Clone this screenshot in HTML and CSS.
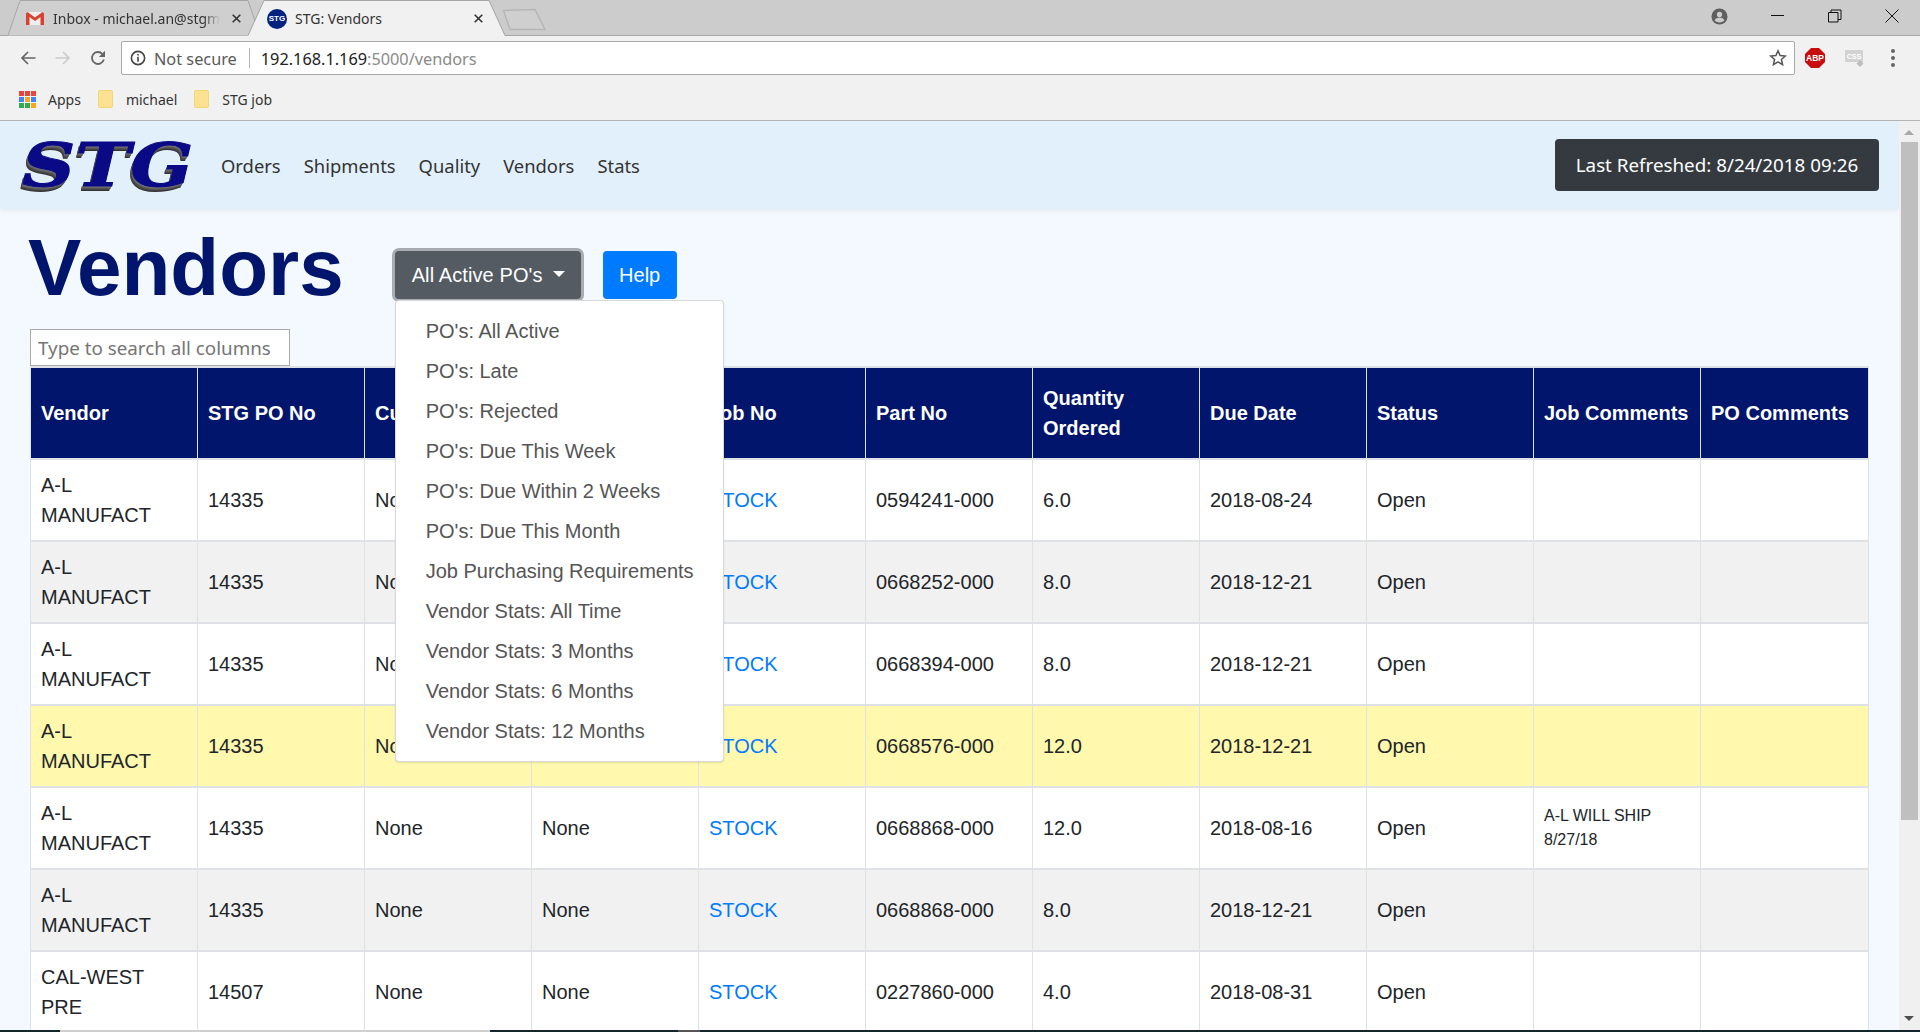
FILE: index.html
```html
<!DOCTYPE html>
<html lang="en">
<head>
    <meta charset="UTF-8">
    <title>STG: Vendors</title>
    <link rel="stylesheet" href="styles.css">
</head>
<body>
<div class="browser">
    <div class="tabstrip">
        <svg class="tab-shapes" viewBox="0 0 560 36">
            <path d="M8 35.500L20 .5H248L260 35.500" fill="#cfcfcf" stroke="#a6a6a6"/>
            <path d="M503.500 10.500L535 9.500L545 29.500H510z" fill="#cfcfcf" stroke="#b6b6b6" stroke-width="1.500"/>
            <path d="M248 36L264 .5H489L505 36z" fill="#f1f1f1"/>
            <path d="M248 35.500L264 .5H489L505 35.500" fill="none" stroke="#a6a6a6"/>
        </svg>
        <div class="tab tab-inactive">
            <svg class="gmail-icon" viewBox="0 0 18 13"><path d="M1 0h16v13H1z" fill="#eee"/><path d="M0 1.500V13h3.500V5L9 9l5.500-4v8H18V1.500L16.500 0 9 5.500 1.500 0z" fill="#d8402f"/></svg>
            <span class="tab-title">Inbox - michael.an@stgm</span>
            <svg class="tab-close" viewBox="0 0 9 9"><path d="M.7.700l7.600 7.600M8.300.700L.7 8.300" stroke="#333" stroke-width="1.600" fill="none"/></svg>
        </div>
        <div class="tab tab-active">
            <span class="tab-favicon">STG</span>
            <span class="tab-title">STG: Vendors</span>
            <svg class="tab-close" viewBox="0 0 9 9"><path d="M.7.700l7.600 7.600M8.300.700L.7 8.300" stroke="#333" stroke-width="1.600" fill="none"/></svg>
        </div>
        <div class="window-controls">
            <svg class="profile-icon" viewBox="0 0 18 18"><circle cx="9" cy="9" r="8.500" fill="#5f5f5f"/><circle cx="9" cy="6.800" r="2.800" fill="#ccc"/><path d="M3.800 13c1-2.200 3-3 5.200-3s4.200.8 5.200 3c-1.300 1.500-3.100 2.300-5.200 2.300S5.100 14.500 3.800 13z" fill="#ccc"/></svg>
            <svg class="win-btn" viewBox="0 0 14 14"><path d="M0 6.500h13" stroke="#111" fill="none"/></svg>
            <svg class="win-btn" viewBox="0 0 14 14"><path d="M.5 3.500h9.500v9.500h-9.500zM3 3.500V1h10v9.500h-3" stroke="#111" fill="none"/></svg>
            <svg class="win-btn" viewBox="0 0 14 14"><path d="M.5.500l13 13M13.500.500l-13 13" stroke="#111" fill="none"/></svg>
        </div>
    </div>
    <div class="toolbar">
        <svg class="nav-icon" viewBox="0 0 16 16"><path d="M15.500 8H2M8 2L2 8l6 6" stroke="#666" stroke-width="1.700" fill="none"/></svg>
        <svg class="nav-icon" viewBox="0 0 16 16"><path d="M.5 8H14M8 2l6 6-6 6" stroke="#ccc" stroke-width="1.700" fill="none"/></svg>
        <svg class="nav-icon reload-icon" viewBox="0 0 16 16"><path d="M13.800 9.500A6 6 0 1 1 12.300 3.800" stroke="#666" stroke-width="1.800" fill="none"/><path d="M15 .8v6.200H8.800z" fill="#666"/></svg>
        <div class="omnibox">
            <svg class="info-icon" viewBox="0 0 14 14"><circle cx="7" cy="7" r="5.800" stroke="#444" stroke-width="1.400" fill="none"/><path d="M6.300 6h1.400v4.300H6.300zM6.300 3.400h1.400v1.500H6.300z" fill="#444"/></svg>
            <span class="not-secure">Not secure</span>
            <span class="omni-sep"></span>
            <span class="url">192.168.1.169<span class="url-dim">:5000/vendors</span></span>
            <svg class="star-icon" viewBox="0 0 18 18"><path d="M9 1.800l2.100 4.800 5.200.5-3.900 3.400 1.200 5.100L9 12.900l-4.600 2.700 1.200-5.100-3.900-3.400 5.200-.5z" stroke="#555" stroke-width="1.500" fill="none"/></svg>
        </div>
        <svg class="abp-icon" viewBox="0 0 20 20"><path d="M6 0h8l6 6v8l-6 6H6l-6-6V6z" fill="#c70d0d"/><text x="10" y="13" class="abp-text">ABP</text></svg>
        <svg class="css-icon" viewBox="0 0 20 17"><path d="M0 0h18v12H0z" fill="#d2d2d2"/><text x="9" y="9" class="css-text">CSS</text><path d="M15 10l3.500 3.500L15 17l-3.500-3.500z" fill="#bdbdbd"/></svg>
        <div class="menu-dots"><i></i><i></i><i></i></div>
    </div>
    <div class="bookmarks">
        <div class="bookmark">
            <span class="apps-grid"><i class="r"></i><i class="r"></i><i class="r"></i><i class="b"></i><i class="y"></i><i class="b"></i><i class="g"></i><i class="g"></i><i class="y"></i></span>
            Apps
        </div>
        <div class="bookmark bookmark-folder"><span class="folder"></span>michael</div>
        <div class="bookmark bookmark-folder"><span class="folder"></span>STG job</div>
    </div>
</div>

<div class="viewport">
    <div class="page">
        <nav class="navbar">
            <div class="brand"><span class="brand-text">STG</span></div>
            <a class="nav-link">Orders</a>
            <a class="nav-link">Shipments</a>
            <a class="nav-link">Quality</a>
            <a class="nav-link">Vendors</a>
            <a class="nav-link">Stats</a>
            <div class="refreshed">Last Refreshed: 8/24/2018 09:26</div>
        </nav>

        <div class="content">
            <div class="title-row">
                <h1>Vendors</h1>
                <div class="dropdown">
                    <button class="btn btn-toggle">All Active PO's<span class="caret"></span></button>
                    <div class="dropdown-menu">
                        <a>PO's: All Active</a>
                        <a>PO's: Late</a>
                        <a>PO's: Rejected</a>
                        <a>PO's: Due This Week</a>
                        <a>PO's: Due Within 2 Weeks</a>
                        <a>PO's: Due This Month</a>
                        <a>Job Purchasing Requirements</a>
                        <a>Vendor Stats: All Time</a>
                        <a>Vendor Stats: 3 Months</a>
                        <a>Vendor Stats: 6 Months</a>
                        <a>Vendor Stats: 12 Months</a>
                    </div>
                </div>
                <button class="btn btn-help">Help</button>
            </div>
            <input class="search" type="text" placeholder="Type to search all columns">
            <table class="vendors">
                <thead>
                    <tr>
                        <th>Vendor</th><th>STG PO No</th><th>Customer</th><th>Sales Order</th><th>Job No</th><th>Part No</th><th>Quantity Ordered</th><th>Due Date</th><th>Status</th><th>Job Comments</th><th>PO Comments</th>
                    </tr>
                </thead>
                <tbody>
                    <tr><td>A-L MANUFACT</td><td>14335</td><td>None</td><td>None</td><td><a>STOCK</a></td><td>0594241-000</td><td>6.0</td><td>2018-08-24</td><td>Open</td><td></td><td></td></tr>
                    <tr><td>A-L MANUFACT</td><td>14335</td><td>None</td><td>None</td><td><a>STOCK</a></td><td>0668252-000</td><td>8.0</td><td>2018-12-21</td><td>Open</td><td></td><td></td></tr>
                    <tr><td>A-L MANUFACT</td><td>14335</td><td>None</td><td>None</td><td><a>STOCK</a></td><td>0668394-000</td><td>8.0</td><td>2018-12-21</td><td>Open</td><td></td><td></td></tr>
                    <tr class="due-soon"><td>A-L MANUFACT</td><td>14335</td><td>None</td><td>None</td><td><a>STOCK</a></td><td>0668576-000</td><td>12.0</td><td>2018-12-21</td><td>Open</td><td></td><td></td></tr>
                    <tr><td>A-L MANUFACT</td><td>14335</td><td>None</td><td>None</td><td><a>STOCK</a></td><td>0668868-000</td><td>12.0</td><td>2018-08-16</td><td>Open</td><td class="comment">A-L WILL SHIP 8/27/18</td><td></td></tr>
                    <tr><td>A-L MANUFACT</td><td>14335</td><td>None</td><td>None</td><td><a>STOCK</a></td><td>0668868-000</td><td>8.0</td><td>2018-12-21</td><td>Open</td><td></td><td></td></tr>
                    <tr><td>CAL-WEST PRE</td><td>14507</td><td>None</td><td>None</td><td><a>STOCK</a></td><td>0227860-000</td><td>4.0</td><td>2018-08-31</td><td>Open</td><td></td><td></td></tr>
                </tbody>
            </table>
        </div>
    </div>
    <div class="scrollbar">
        <span class="arrow-up"></span>
        <div class="thumb"></div>
        <span class="arrow-down"></span>
    </div>
</div>
<div class="taskbar-edge">
    <span class="edge-dark"></span>
    <span class="edge-light"></span>
    <span class="edge-dark edge-wide"></span>
    <span class="edge-grey"></span>
    <span class="edge-dark edge-rest"></span>
</div>
</body>
</html>
```

FILE: styles.css
```css
* {
    box-sizing: border-box;
}

html, body {
    margin: 0;
    height: 1032px;
    overflow: hidden;
}

body {
    display: flex;
    flex-direction: column;
    font-family: "Liberation Sans", Arial, sans-serif;
    background-color: #f3f9ff;
}

/* browser chrome */
.browser {
    flex: none;
    height: 121px;
    background-color: #f1f1f1;
    border-bottom: 1px solid #b4b4b4;
    font-family: "Noto Sans", "Open Sans", sans-serif;
}

.tabstrip {
    position: relative;
    display: flex;
    align-items: flex-start;
    height: 36px;
    padding-left: 26px;
    background-color: #cccccc;
    border-bottom: 1px solid #a6a6a6;
}

.tab-shapes {
    position: absolute;
    top: 0;
    left: 0;
    width: 560px;
    height: 36px;
}

.tab {
    position: relative;
    display: flex;
    align-items: center;
    height: 35px;
    padding-top: 2px;
    font-size: 14px;
    color: #333;
}

.gmail-icon {
    flex: none;
    width: 18px;
    height: 13px;
    margin-right: 9px;
}

.tab-inactive .tab-title {
    width: 167px;
    -webkit-mask-image: linear-gradient(to right, #000 90%, transparent);
    mask-image: linear-gradient(to right, #000 90%, transparent);
}

.tab-active {
    margin-left: 26px;
}

.tab-active .tab-title {
    width: 179px;
}

.tab-favicon {
    flex: none;
    width: 20px;
    height: 20px;
    margin-right: 8px;
    border-radius: 50%;
    background-color: #03217f;
    color: #fff;
    font: bold 8px/20px "Liberation Sans", sans-serif;
    text-align: center;
}

.tab-title {
    overflow: hidden;
    white-space: nowrap;
}

.tab-close {
    flex: none;
    width: 9px;
    height: 9px;
}

.tab-inactive .tab-close {
    margin-left: 12px;
}

.window-controls {
    position: relative;
    display: flex;
    align-items: center;
    gap: 43px;
    margin-left: auto;
    height: 32px;
    padding-right: 21px;
}

.profile-icon {
    width: 17px;
    height: 17px;
}

.win-btn {
    width: 14px;
    height: 14px;
}

.toolbar {
    display: flex;
    align-items: center;
    height: 44px;
    padding-left: 20px;
}

.nav-icon {
    width: 16px;
    height: 16px;
    margin-right: 19px;
    flex: none;
}

.reload-icon {
    margin-right: 15px;
}

.omnibox {
    display: flex;
    align-items: center;
    flex: none;
    width: 1674px;
    height: 34px;
    padding: 0 7px 0 8px;
    background-color: #fff;
    border: 1px solid #a9a9a9;
    border-radius: 2px;
    font-size: 16.300px;
}

.info-icon {
    width: 16px;
    height: 16px;
    margin-right: 8px;
}

.not-secure {
    padding-top: 2px;
    color: #5a5a5a;
}

.omni-sep {
    width: 1px;
    height: 20px;
    margin: 0 11px 0 12px;
    background-color: #b5b5b5;
}

.url {
    padding-top: 2px;
    color: #222;
}

.url-dim {
    color: #8a8a8a;
}

.star-icon {
    width: 18px;
    height: 18px;
    margin-left: auto;
}

.abp-icon {
    width: 20px;
    height: 20px;
    margin-left: 10px;
}

.abp-text {
    font: bold 8.500px "Liberation Sans", sans-serif;
    fill: #fff;
    text-anchor: middle;
}

.css-icon {
    width: 20px;
    height: 17px;
    margin-left: 20px;
}

.css-text {
    font: bold 7px "Liberation Sans", sans-serif;
    fill: #fff;
    text-anchor: middle;
}

.menu-dots {
    display: flex;
    flex-direction: column;
    gap: 3px;
    margin-left: 26px;
}

.menu-dots i {
    width: 4px;
    height: 4px;
    border-radius: 50%;
    background-color: #666;
}

.bookmarks {
    display: flex;
    align-items: center;
    height: 40px;
    padding: 0 0 2px 19px;
    font-size: 14px;
    color: #333;
}

.bookmark {
    display: flex;
    align-items: center;
}

.bookmark-folder {
    margin-left: 17px;
}

.apps-grid {
    display: grid;
    grid-template-columns: repeat(3, 5px);
    gap: 1px;
    margin-right: 12px;
}

.apps-grid i {
    height: 5px;
}

.apps-grid .r { background-color: #e8453c; }
.apps-grid .b { background-color: #4285f4; }
.apps-grid .y { background-color: #f4a81d; }
.apps-grid .g { background-color: #34a853; }

.folder {
    width: 15px;
    height: 18px;
    margin-right: 13px;
    background-color: #fde293;
    border: 1px solid #f0d675;
    border-radius: 2px;
}

/* page */
.viewport {
    flex: 1;
    display: flex;
    min-height: 0;
}

.page {
    flex: 1;
    min-width: 0;
    overflow: hidden;
}

.navbar {
    display: flex;
    align-items: center;
    height: 88px;
    padding: 0 20px 0 21px;
    background-color: #e2f0fc;
    box-shadow: 0 2px 4px rgba(0, 0, 0, 0.06);
    font-family: "Noto Sans", "Open Sans", sans-serif;
}

.brand {
    width: 200px;
    padding-left: 1px;
}

.brand-text {
    display: inline-block;
    font: italic bold 60px/1 "DejaVu Serif", serif;
    color: #0b0a86;
    -webkit-text-stroke: 1px #0b0a86;
    text-shadow: 0 1px #777, -1px 2px #666, -1px 3px #555, -2px 4px #444, -2px 5px #333;
    transform: scaleX(1.23);
    transform-origin: left center;
}

.nav-link {
    font-size: 18.400px;
    color: #333;
    margin-right: 23px;
}

.refreshed {
    margin-left: auto;
    width: 324px;
    height: 52px;
    background-color: #343a40;
    border-radius: 4px;
    color: #fff;
    font-size: 18.800px;
    line-height: 53px;
    text-align: center;
}

.content {
    padding-left: 30px;
}

.title-row {
    display: flex;
    align-items: flex-start;
    height: 120px;
    padding-top: 11px;
}

h1 {
    margin: 0 51px 0 -2px;
    font-size: 80px;
    line-height: 96px;
    font-weight: bold;
    color: #00156b;
}

.dropdown {
    position: relative;
    margin: 31px 22px 0 0;
}

.btn {
    display: block;
    height: 48px;
    border: 0;
    border-radius: 4px;
    color: #fff;
    font: 20px "Liberation Sans", Arial, sans-serif;
}

.btn-toggle {
    width: 186px;
    padding: 0 0 0 17px;
    background-color: #545b62;
    box-shadow: 0 0 0 3px #a9adb1;
    text-align: left;
    letter-spacing: 0.1px;
}

.caret {
    display: inline-block;
    margin-left: 10px;
    vertical-align: 5px;
    border-top: 6px solid #fff;
    border-left: 6px solid transparent;
    border-right: 6px solid transparent;
}

.btn-help {
    width: 74px;
    margin-top: 31px;
    background-color: #007bff;
}

.dropdown-menu {
    position: absolute;
    top: 49px;
    left: 0;
    z-index: 10;
    width: 329px;
    height: 462px;
    padding: 10px 0 0;
    background-color: #fff;
    border: 1px solid rgba(0, 0, 0, 0.15);
    border-radius: 4px;
    box-shadow: 0 1px 2px rgba(0, 0, 0, 0.1);
}

.dropdown-menu a {
    display: block;
    height: 40px;
    padding: 0 30px;
    font-size: 20px;
    line-height: 40px;
    color: #555;
    white-space: nowrap;
}

.search {
    display: block;
    width: 260px;
    height: 37px;
    margin: 0;
    padding: 0 7px;
    border: 1px solid #a9a9a9;
    background-color: #fff;
    font: 18.800px "Noto Sans", "Open Sans", sans-serif;
}

.search::placeholder {
    color: #757575;
}

.vendors {
    width: 1839px;
    table-layout: fixed;
    border-collapse: collapse;
    background-color: #fff;
    font-size: 20px;
    color: #212529;
    line-height: 29.500px;
    border-top: 2px solid #dee2e6;
}

.vendors th {
    height: 92px;
    padding: 1px 10px 0;
    background-color: #00156b;
    border: 1px solid #dee2e6;
    border-bottom-width: 2px;
    color: #fff;
    text-align: left;
    font-weight: bold;
}

.vendors th:last-child {
    width: 168px;
}

.vendors td {
    height: 82px;
    padding: 1px 14px 0 10px;
    border: 1px solid #dee2e6;
    border-bottom-width: 2px;
}

.vendors tbody tr:nth-child(even) {
    background-color: #f1f1f1;
}

.vendors tbody tr.due-soon {
    background-color: #fff8ad;
}

.vendors a {
    color: #007bff;
}

.vendors .comment {
    padding-top: 0;
    font-size: 16px;
    line-height: 24px;
}

.scrollbar {
    flex: none;
    position: relative;
    width: 21px;
    background-color: #f0f0f0;
}

.thumb {
    position: absolute;
    top: 21px;
    left: 2px;
    width: 17px;
    height: 678px;
    background-color: #bfbfbf;
}

.arrow-up, .arrow-down {
    position: absolute;
    left: 5px;
    border-left: 5px solid transparent;
    border-right: 5px solid transparent;
}

.arrow-up {
    top: 9px;
    border-bottom: 5px solid #a8a8a8;
}

.arrow-down {
    bottom: 9px;
    border-top: 5px solid #505050;
}

.taskbar-edge {
    flex: none;
    display: flex;
    height: 2px;
}

.edge-dark {
    width: 60px;
    background-color: #12262c;
}

.edge-light {
    width: 430px;
    background-color: #cfcfcf;
}

.edge-wide {
    width: 188px;
}

.edge-grey {
    width: 22px;
    background-color: #555;
}

.edge-rest {
    flex: 1;
}
```
